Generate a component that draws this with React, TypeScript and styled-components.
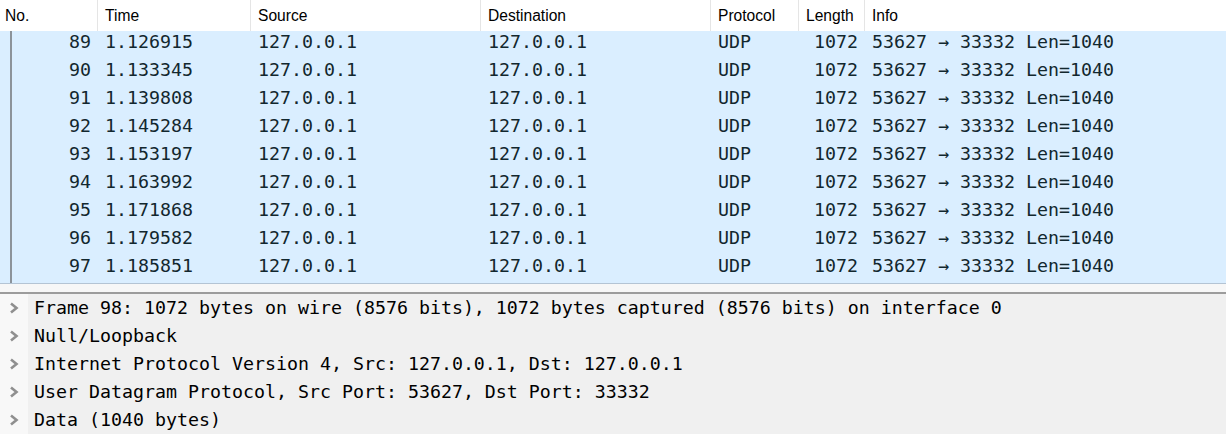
import * as React from 'react';
import styled, { createGlobalStyle } from 'styled-components';

const GlobalStyle = createGlobalStyle`
  html, body {
    margin: 0;
    padding: 0;
    background: #f0f0f0;
  }
  #root {
    width: 1226px;
    height: 434px;
    overflow: hidden;
  }
`;

const COLUMNS = '98px 153px 230px 230px 88px 66px 1fr';

interface Packet {
  no: number;
  time: string;
}

const packets: Packet[] = [
  { no: 89, time: '1.126915' },
  { no: 90, time: '1.133345' },
  { no: 91, time: '1.139808' },
  { no: 92, time: '1.145284' },
  { no: 93, time: '1.153197' },
  { no: 94, time: '1.163992' },
  { no: 95, time: '1.171868' },
  { no: 96, time: '1.179582' },
  { no: 97, time: '1.185851' },
];

const details = [
  'Frame 98: 1072 bytes on wire (8576 bits), 1072 bytes captured (8576 bits) on interface 0',
  'Null/Loopback',
  'Internet Protocol Version 4, Src: 127.0.0.1, Dst: 127.0.0.1',
  'User Datagram Protocol, Src Port: 53627, Dst Port: 33332',
  'Data (1040 bytes)',
];

const Window = styled.div`
  display: flex;
  flex-direction: column;
  width: 1226px;
  height: 434px;
  background: #f0f0f0;
  overflow: hidden;
`;

const PacketList = styled.div`
  flex: none;
  background: #ffffff;
  border-bottom: 1px solid #b4c4d4;
`;

const HeaderRow = styled.div`
  display: grid;
  grid-template-columns: ${COLUMNS};
  height: 31px;
  background: #ffffff;
`;

const HeaderCell = styled.div<{ first?: boolean }>`
  font-family: 'Liberation Sans', Arial, sans-serif;
  font-size: 15.6px;
  color: #000000;
  line-height: 31px;
  padding-left: ${({ first }) => (first ? '5px' : '7px')};
  border-right: 1px solid #e5e5e5;
  white-space: nowrap;
  overflow: hidden;
  &:last-child {
    border-right: none;
  }
`;

const PacketRow = styled.div`
  display: grid;
  grid-template-columns: ${COLUMNS};
  height: 28px;
  background: #daeeff;
  color: #12272e;
`;

const Cell = styled.div<{ right?: boolean }>`
  font-family: 'DejaVu Sans Mono', 'Liberation Mono', monospace;
  font-size: 18.27px;
  line-height: 22px;
  padding: 0 7px 6px 7px;
  text-align: ${({ right }) => (right ? 'right' : 'left')};
  white-space: nowrap;
  overflow: hidden;
`;

const NoCell = styled(Cell)`
  position: relative;
  &::before {
    content: '';
    position: absolute;
    left: 10px;
    top: 0;
    bottom: 0;
    width: 2px;
    background: #8c939a;
  }
`;

const Splitter = styled.div`
  flex: none;
  height: 8px;
  background: #f7f7f7;
  border-bottom: 2px solid #9c9c9c;
`;

const DetailPane = styled.div`
  flex: 1;
  min-height: 0;
  overflow: hidden;
  display: flex;
  flex-direction: column;
  padding-top: 3px;
  background: linear-gradient(to right, #f8f8f8 28px, #f0f0f0 28px);
`;

const DetailRow = styled.div`
  flex: none;
  display: flex;
  height: 28px;
`;

const Gutter = styled.div`
  width: 28px;
  flex: none;
  display: flex;
  align-items: center;
  justify-content: center;
  padding-bottom: 6px;
  box-sizing: border-box;
`;

const DetailText = styled.div`
  font-family: 'DejaVu Sans Mono', 'Liberation Mono', monospace;
  font-size: 18.27px;
  line-height: 22px;
  padding-left: 6px;
  color: #000000;
  white-space: nowrap;
`;

const Chevron = () => (
  <svg width="12" height="14" viewBox="0 0 12 14">
    <polyline points="3,2.5 8.5,7 3,11.5" fill="none" stroke="#8f8f8f" strokeWidth="2.6" />
  </svg>
);

const headers = ['No.', 'Time', 'Source', 'Destination', 'Protocol', 'Length', 'Info'];

export default function App() {
  return (
    <Window>
      <GlobalStyle />
      <PacketList>
        <HeaderRow>
          {headers.map((h, i) => (
            <HeaderCell key={h} first={i === 0}>
              {h}
            </HeaderCell>
          ))}
        </HeaderRow>
        {packets.map(p => (
          <PacketRow key={p.no}>
            <NoCell right>{p.no}</NoCell>
            <Cell>{p.time}</Cell>
            <Cell>127.0.0.1</Cell>
            <Cell>127.0.0.1</Cell>
            <Cell>UDP</Cell>
            <Cell right>1072</Cell>
            <Cell>53627 → 33332 Len=1040</Cell>
          </PacketRow>
        ))}
      </PacketList>
      <Splitter />
      <DetailPane>
        {details.map(d => (
          <DetailRow key={d}>
            <Gutter>
              <Chevron />
            </Gutter>
            <DetailText>{d}</DetailText>
          </DetailRow>
        ))}
      </DetailPane>
    </Window>
  );
}
